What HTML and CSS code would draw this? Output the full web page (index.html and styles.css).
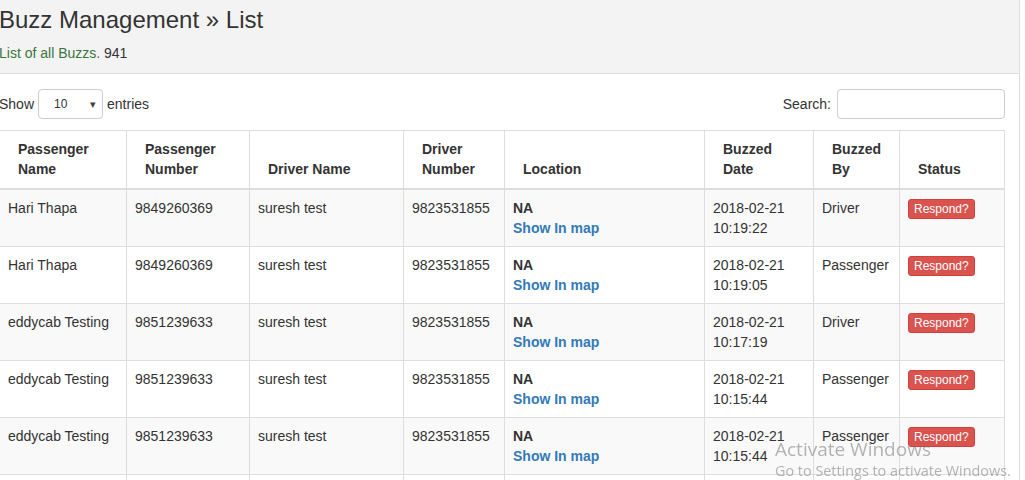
FILE: index.html
```html
<!DOCTYPE html>
<html>
<head>
<meta charset="utf-8">
<link rel="stylesheet" href="styles.css">
</head>
<body>
<div class="page">
  <div class="page-head">
    <h1 class="title">Buzz Management » List</h1>
    <p class="subtitle"><span class="green">List of all Buzzs.</span> 941</p>
  </div>
  <div class="toolbar">
    <div class="length">Show <span class="select"><span class="sel-val">10</span><span class="sel-arrow">▾</span></span> entries</div>
    <div class="search">Search: <span class="input"></span></div>
  </div>
  <table class="grid">
    <colgroup>
      <col class="c1"><col class="c2"><col class="c3"><col class="c4"><col class="c5"><col class="c6"><col class="c7"><col class="c8">
    </colgroup>
    <thead>
      <tr>
        <th>Passenger<br>Name</th>
        <th>Passenger<br>Number</th>
        <th>Driver Name</th>
        <th>Driver<br>Number</th>
        <th>Location</th>
        <th>Buzzed<br>Date</th>
        <th>Buzzed<br>By</th>
        <th>Status</th>
      </tr>
    </thead>
    <tbody>
      <tr>
        <td>Hari Thapa</td><td>9849260369</td><td>suresh test</td><td>9823531855</td>
        <td><b>NA</b><br><a class="map">Show In map</a></td>
        <td>2018-02-21<br>10:19:22</td><td>Driver</td><td><span class="btn">Respond?</span></td>
      </tr>
      <tr>
        <td>Hari Thapa</td><td>9849260369</td><td>suresh test</td><td>9823531855</td>
        <td><b>NA</b><br><a class="map">Show In map</a></td>
        <td>2018-02-21<br>10:19:05</td><td>Passenger</td><td><span class="btn">Respond?</span></td>
      </tr>
      <tr>
        <td>eddycab Testing</td><td>9851239633</td><td>suresh test</td><td>9823531855</td>
        <td><b>NA</b><br><a class="map">Show In map</a></td>
        <td>2018-02-21<br>10:17:19</td><td>Driver</td><td><span class="btn">Respond?</span></td>
      </tr>
      <tr>
        <td>eddycab Testing</td><td>9851239633</td><td>suresh test</td><td>9823531855</td>
        <td><b>NA</b><br><a class="map">Show In map</a></td>
        <td>2018-02-21<br>10:15:44</td><td>Passenger</td><td><span class="btn">Respond?</span></td>
      </tr>
      <tr>
        <td>eddycab Testing</td><td>9851239633</td><td>suresh test</td><td>9823531855</td>
        <td><b>NA</b><br><a class="map">Show In map</a></td>
        <td>2018-02-21<br>10:15:44</td><td>Passenger</td><td><span class="btn">Respond?</span></td>
      </tr>
      <tr>
        <td>eddycab Testing</td><td>9851239633</td><td>suresh test</td><td>9823531855</td>
        <td><b>NA</b><br><a class="map">Show In map</a></td>
        <td>2018-02-21<br>10:15:44</td><td>Passenger</td><td><span class="btn">Respond?</span></td>
      </tr>
    </tbody>
  </table>
</div>
<div class="watermark">
  <div class="wm1">Activate Windows</div>
  <div class="wm2">Go to Settings to activate Windows.</div>
</div>
</body>
</html>
```
FILE: styles.css
```css
html, body {
  margin: 0;
  padding: 0;
  background: #fff;
  overflow: hidden;
}
body {
  font-family: "Liberation Sans", Arial, sans-serif;
  font-size: 14px;
  line-height: 20px;
  color: #333;
}
.page {
  width: 1021px;
  margin-left: -1px;
  border-right: 1px solid #ddd;
  min-height: 480px;
  box-sizing: border-box;
}
.page-head {
  background: #f3f3f3;
  border-bottom: 1px solid #ddd;
  padding: 7px 0 10px 0;
}
.title {
  margin: 0;
  font-size: 24px;
  line-height: 26px;
  font-weight: normal;
  color: #333;
}
.subtitle {
  margin: 10px 0 0 0;
  font-size: 14px;
  line-height: 20px;
  color: #333;
}
.green { color: #3c763d; }
.toolbar {
  display: flex;
  justify-content: space-between;
  align-items: center;
  margin-top: 15px;
  width: 1006px;
}
.length, .search {
  display: flex;
  align-items: center;
  font-size: 14px;
}
.select {
  display: inline-flex;
  align-items: center;
  justify-content: space-between;
  width: 65px;
  height: 30px;
  box-sizing: border-box;
  border: 1px solid #ccc;
  border-radius: 4px;
  margin: 0 4px;
  padding: 0 6px 0 15px;
  font-size: 12px;
  background: #fff;
}
.sel-arrow { font-size: 11px; color: #444; }
.input {
  display: inline-block;
  width: 168px;
  height: 30px;
  box-sizing: border-box;
  border: 1px solid #ccc;
  border-radius: 4px;
  margin-left: 6px;
  background: #fff;
}
.grid {
  margin-top: 11px;
  border-collapse: collapse;
  table-layout: fixed;
  width: 1006px;
  border: 1px solid #ddd;
}
.c1 { width: 127px; }
.c2 { width: 123px; }
.c3 { width: 154px; }
.c4 { width: 101px; }
.c5 { width: 200px; }
.c6 { width: 109px; }
.c7 { width: 86px; }
.c8 { width: 105px; }
.grid th, .grid td {
  border: 1px solid #ddd;
  padding: 8px;
  text-align: left;
  vertical-align: top;
}
.grid th {
  vertical-align: bottom;
  border-bottom: 2px solid #ddd;
  padding-left: 18px;
  padding-bottom: 9px;
  font-weight: bold;
}
.grid td { height: 40px; }
.grid tbody tr:nth-child(odd) td { background: #f9f9f9; }
.grid td b { font-weight: bold; }
.map {
  color: #337ab7;
  font-weight: bold;
  text-decoration: none;
}
.btn {
  display: inline-block;
  background: #d9534f;
  border: 1px solid #d43f3a;
  color: #fff;
  font-size: 12px;
  line-height: 18px;
  padding: 0 5px;
  border-radius: 3px;
  margin-top: 1px;
}
.watermark {
  position: fixed;
  left: 775px;
  top: 436px;
  color: rgba(120,120,120,0.55);
  font-family: "Open Sans", "Noto Sans", sans-serif;
  pointer-events: none;
}
.wm1 { font-size: 19px; line-height: 26px; }
.wm2 { font-size: 14.4px; line-height: 18px; }
```
